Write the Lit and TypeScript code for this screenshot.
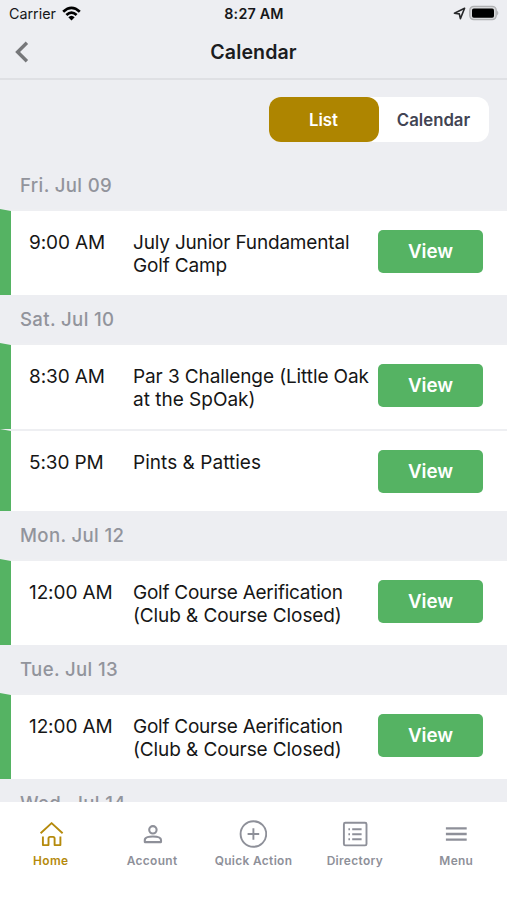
import { LitElement, html, css, svg } from "lit";
import { customElement, property, state } from "lit/decorators.js";
import { classMap } from "lit/directives/class-map.js";
import { styleMap } from "lit/directives/style-map.js";

interface Line { text: string; tracking: number; }
interface ClubEvent { time: string; title: Line[]; }
interface Day { label: string; events: ClubEvent[]; }

const AERIFICATION: Line[] = [
  { text: "Golf Course Aerification", tracking: -0.25 },
  { text: "(Club & Course Closed)", tracking: -0.1 },
];

const DAYS: Day[] = [
  {
    label: "Fri. Jul 09",
    events: [{ time: "9:00 AM", title: [{ text: "July Junior Fundamental", tracking: -0.18 }, { text: "Golf Camp", tracking: -0.15 }] }],
  },
  {
    label: "Sat. Jul 10",
    events: [
      { time: "8:30 AM", title: [{ text: "Par 3 Challenge (Little Oak", tracking: -0.1 }, { text: "at the SpOak)", tracking: 0 }] },
      { time: "5:30 PM", title: [{ text: "Pints & Patties", tracking: 0.04 }] },
    ],
  },
  { label: "Mon. Jul 12", events: [{ time: "12:00 AM", title: AERIFICATION }] },
  { label: "Tue. Jul 13", events: [{ time: "12:00 AM", title: AERIFICATION }] },
  { label: "Wed. Jul 14", events: [] },
];

const TABS = [
  {
    label: "Home",
    icon: svg`<path d="M3.6 13.3 14.6 3.1 25.6 13.3M5.9 16.4V25.1H11.5V18.6Q11.5 16.9 13.1 16.9H16Q17.6 16.9 17.6 18.6V25.1H23.4V16.4"/>`,
  },
  {
    label: "Account",
    icon: svg`<g stroke-width="2.1"><circle cx="14.9" cy="9.8" r="3.7"/><path d="M6.8 22.1V20C6.8 17.4 11.2 16.5 14.9 16.5S23 17.4 23 20V22.1Z"/></g>`,
  },
  { label: "Quick Action", icon: svg`<circle cx="14.4" cy="14" r="12.8"/><path d="M14.4 8.2V19.8M8.6 14H20.2"/>` },
  {
    label: "Directory",
    icon: svg`<rect x="2.9" y="2.8" width="22.6" height="22.6" rx="1.4"/><path d="M11.2 9.2H20.6M11.2 14.2H20.6M11.2 19.2H20.6M7.4 9.2H9M7.4 14.2H9M7.4 19.2H9"/>`,
  },
  { label: "Menu", icon: svg`<path stroke-width="2.3" d="M3.9 8.3H24.7M3.9 14H24.7M3.9 19.7H24.7"/>` },
];

@customElement("status-bar")
class StatusBar extends LitElement {
  static styles = css`
    :host { display: grid; grid-template-columns: 1fr auto 1fr; align-items: center; height: 26px; padding: 0 8px 2px 9px; font-size: 14.3px; color: #161719; }
    .left, .right { display: flex; align-items: center; height: 26px; }
    .left { gap: 6px; }
    .right { justify-content: flex-end; gap: 3px; }
    .time { font-weight: 600; letter-spacing: 0.2px; }
    svg { display: block; }
  `;
  render() {
    return html`
      <div class="left"><span>Carrier</span>
        <svg width="19" height="15" viewBox="0 0 19 15" fill="none" stroke="#000" stroke-width="2.7">
          <path d="M1.2 5.8Q9.5 -2 17.8 5.8M4.4 9Q9.5 4.2 14.6 9"/><path fill="#000" stroke="none" d="M6.3 11.2Q9.5 8.2 12.7 11.2L9.5 14.5Z"/>
        </svg>
      </div>
      <span class="time">8:27 AM</span>
      <div class="right">
        <svg width="13" height="13" viewBox="0 0 13 13" fill="none" stroke="#28292b" stroke-width="1.6" stroke-linejoin="round"><path d="M11.6 1.3 1.4 6.2 6.3 6.9 7.4 11.6Z"/></svg>
        <svg width="30" height="16" viewBox="0 0 30 16">
          <rect x="0.8" y="1.4" width="26.4" height="13.2" rx="4" fill="#d8d9db" stroke="#b0b1b3" stroke-width="1.4"/>
          <rect x="3" y="3.4" width="22" height="9.4" rx="1.8"/><path d="M28.2 5.6Q30.4 8 28.2 10.4Z" fill="#a9aaac"/>
        </svg>
      </div>`;
  }
}

@customElement("event-row")
class EventRow extends LitElement {
  @property({ attribute: false }) event!: ClubEvent;
  static styles = css`
    :host { display: flex; align-items: flex-start; box-sizing: border-box; border-left: 11px solid #55b363; border-top: 2px solid #eeeff2; background: #fff; padding: 19px 24px 0 18px; height: 86px; color: #161616; }
    :host([single]) { height: 82px; }
    .time, .title { font-size: 19px; line-height: 23px; white-space: nowrap; padding-top: 1px; }
    .time { width: 104px; letter-spacing: -0.1px; }
    .title { flex: 1; }
    .view { width: 105px; height: 43px; border: 0; border-radius: 5px; background: #55b363; color: #fff; font: 600 18.8px/43px Inter, sans-serif; padding: 0; }
  `;
  render() {
    return html`
      <div class="time">${this.event.time}</div>
      <div class="title">${this.event.title.map((l) => html`<div style=${styleMap({ letterSpacing: `${l.tracking}px` })}>${l.text}</div>`)}</div>
      <button class="view">View</button>`;
  }
}

@customElement("tab-bar")
class TabBar extends LitElement {
  @state() active = "Home";
  static styles = css`
    :host { display: grid; grid-template-columns: repeat(5, 1fr); height: 98px; background: #fff; }
    .tab { display: flex; flex-direction: column; align-items: center; padding-top: 18px; color: #8e9099; font-size: 11.9px; font-weight: 600; line-height: 16px; letter-spacing: 0.34px; white-space: nowrap; }
    .active { color: #b58a0c; }
    svg { display: block; margin-bottom: 5px; fill: none; stroke: currentColor; stroke-width: 1.9; stroke-linejoin: round; }
  `;
  render() {
    return html`${TABS.map((t) => html`
      <div class=${classMap({ tab: true, active: t.label === this.active })}>
        <svg width="28" height="28" viewBox="0 0 28 28">${t.icon}</svg><span>${t.label}</span>
      </div>`)}`;
  }
}

@customElement("app-root")
class AppRoot extends LitElement {
  static styles = css`
    :host { display: flex; flex-direction: column; height: 900px; overflow: hidden; background: #edeef2; font-family: Inter, "Liberation Sans", sans-serif; }
    .nav { display: grid; grid-template-columns: 40px 1fr 40px; align-items: center; height: 48px; padding-bottom: 2px; border-bottom: 2px solid #dfe0e4; }
    .back { display: block; margin-left: 14px; }
    .heading { text-align: center; font-size: 19.6px; font-weight: 600; letter-spacing: 0.1px; color: #1b1c1e; }
    .switch { display: flex; justify-content: flex-end; padding: 17px 18.5px 19px 0; }
    .pill { display: flex; width: 220px; height: 45px; border-radius: 12px; background: #fff; }
    .option { flex: 1; text-align: center; font-size: 16.8px; font-weight: 600; line-height: 46px; color: #424453; border-radius: 12px; }
    .selected { background: #ae8500; color: #fff; }
    .list { flex: 1; min-height: 0; overflow: hidden; }
    .day { height: 48px; line-height: 48px; padding-left: 20px; font-size: 18.6px; font-weight: 500; letter-spacing: 0.35px; color: #92949c; }
    tab-bar { flex: none; }
  `;
  render() {
    return html`
      <status-bar></status-bar>
      <div class="nav">
        <svg class="back" width="16" height="22" viewBox="0 0 16 22" fill="none" stroke="#76777a" stroke-width="3.4"><path d="M12.9 1.8 3.6 11 12.9 20.2"/></svg>
        <div class="heading">Calendar</div>
      </div>
      <div class="switch"><div class="pill"><div class="option selected">List</div><div class="option">Calendar</div></div></div>
      <div class="list">
        ${DAYS.map((d) => html`
          <div class="day">${d.label}</div>
          ${d.events.map((e) => html`<event-row .event=${e} ?single=${e.title.length === 1}></event-row>`)}`)}
      </div>
      <tab-bar></tab-bar>`;
  }
}
